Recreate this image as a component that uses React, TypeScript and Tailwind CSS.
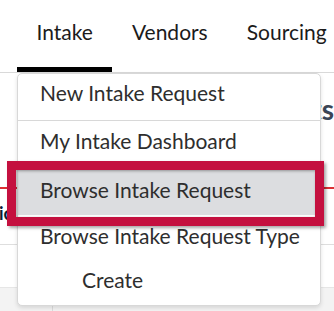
import React from 'react';

const tabs = ['Intake', 'Vendors', 'Sourcing'];

const items = [
  { label: 'New Intake Request', cls: 'h-[47px] pt-[6px] pl-[22px] border-b border-[#d8d8d8]' },
  { label: 'My Intake Dashboard', cls: 'h-[45px] pt-[7px] pl-[22px]' },
  { label: 'Browse Intake Request', cls: 'h-[49px] pt-[11px] pl-[22px] bg-[#dcdde0]' },
  { label: 'Browse Intake Request Type', cls: 'h-[44px] pt-[8px] pl-[22px]' },
  { label: 'Create', cls: 'h-[46px] pt-[8px] pl-[64px]' },
];

const App: React.FC = () => {
  return (
    <div className="relative w-[334px] h-[311px] overflow-hidden bg-white font-['Lato','Noto_Sans',sans-serif]">
      {/* Top nav */}
      <nav className="flex h-[73px] pl-[17px] border-b border-[#d9d9d9]">
        {tabs.map((t, i) => (
          <div
            key={t}
            className={`px-[19.5px] pt-[19px] h-full text-[21px] leading-[25px] text-[#1b1b1b] whitespace-nowrap
              ${i === 0 ? 'border-b-[5px] border-black' : ''}`}
          >
            {t}
          </div>
        ))}
      </nav>

      {/* Page behind the menu */}
      <div className="flex flex-col">
        <div className="h-[60px] pt-[19px] flex justify-end whitespace-nowrap">
          <h2 className="text-[28px] leading-[34px] font-bold text-[#3a4555]">Intake Requests</h2>
        </div>
        <div className="h-[54px]" />
        <div className="h-[2px] bg-[#dc2f33]" />
        <div className="h-[55px] pt-[13px] overflow-hidden">
          <span className="block -ml-[1px] text-[18px] leading-[22px] font-bold text-[#0d1b33]">ic</span>
        </div>
        <div className="h-px bg-[#dedede]" />
        <div className="h-[42px]" />
        <div className="h-[30px] bg-[#f3f3f3] border-t border-[#e6e6e6] flex">
          <div className="w-[52px]" />
          <div className="mt-[12px] w-px h-[20px] bg-[#dcdcdc]" />
        </div>
      </div>

      {/* Dropdown */}
      <div className="absolute left-[17px] top-[73px] w-[304px] bg-white border border-[#d8d8d8] rounded-[5px] shadow-[0_2px_4px_rgba(0,0,0,0.12)] flex flex-col overflow-hidden">
        {items.map((it) => (
          <div
            key={it.label}
            className={`text-[21px] leading-[26px] text-[#2e2e2e] whitespace-nowrap ${it.cls}`}
          >
            {it.label}
          </div>
        ))}
      </div>

      {/* Annotation box */}
      <div className="absolute left-[7px] top-[161px] w-[317px] h-[65px] border-[9px] border-[#c4103f] shadow-[2px_2px_3px_rgba(0,0,0,0.35),inset_1px_1px_3px_rgba(0,0,0,0.35)]" />
    </div>
  );
};

export default App;
